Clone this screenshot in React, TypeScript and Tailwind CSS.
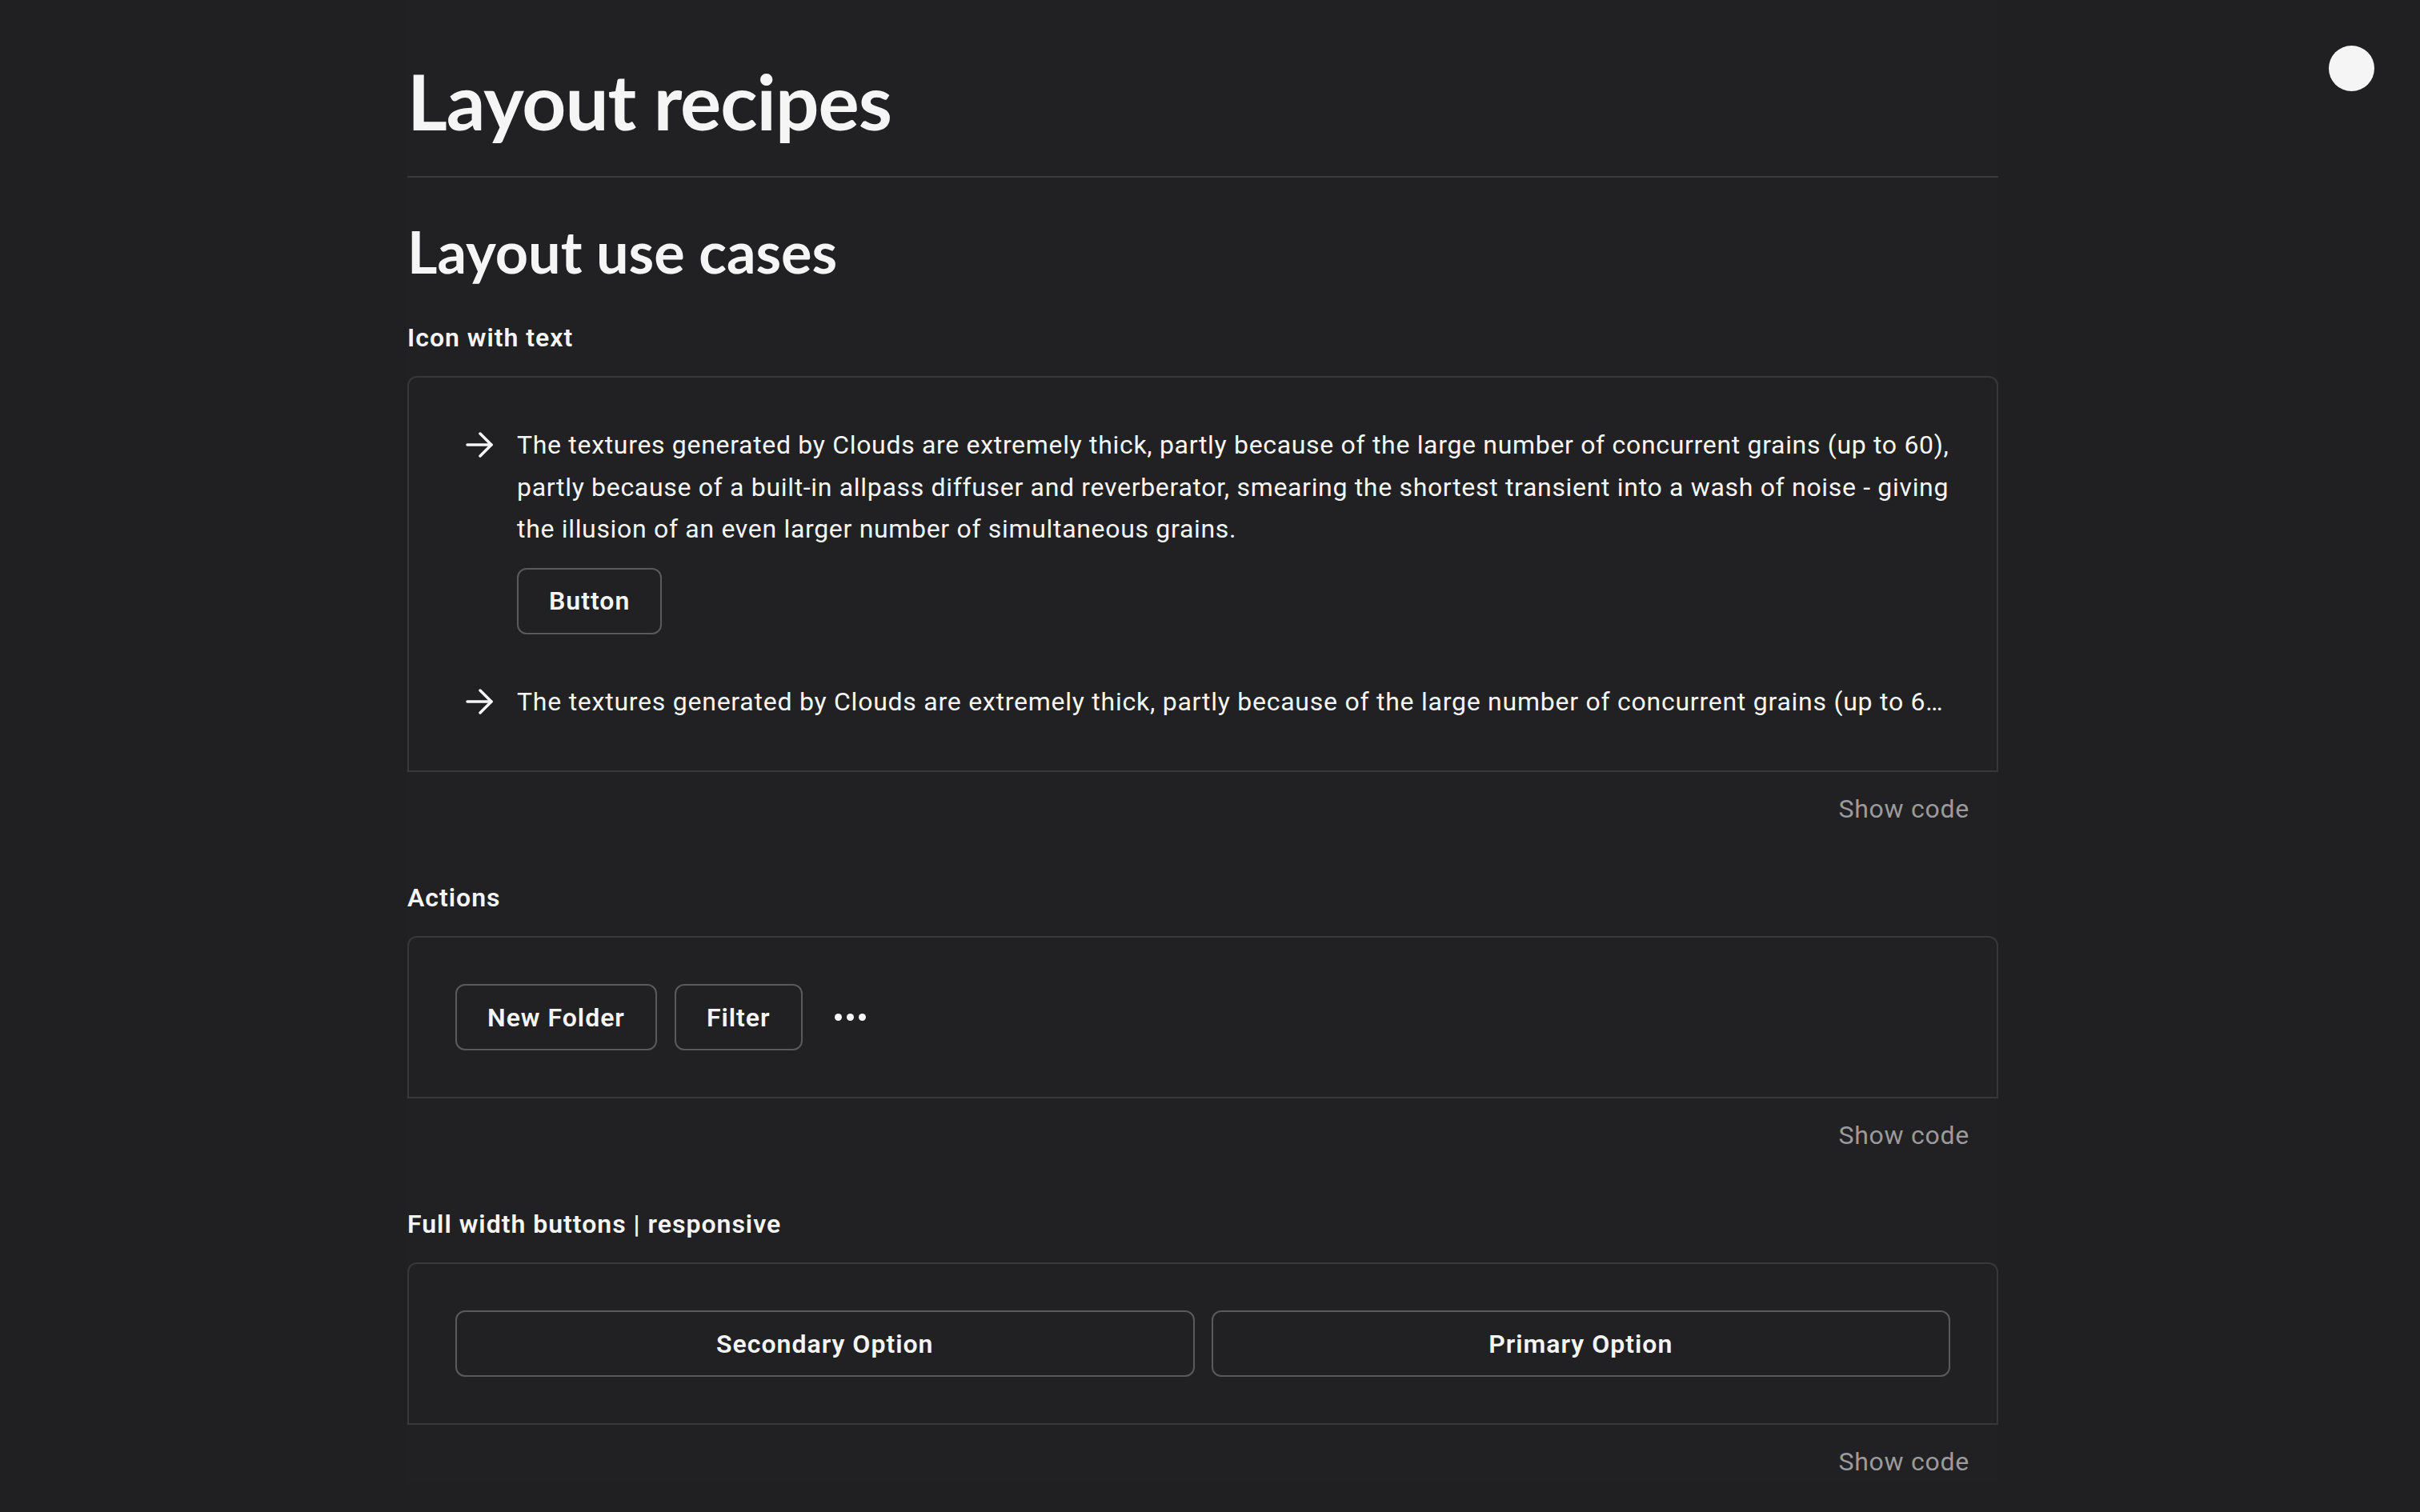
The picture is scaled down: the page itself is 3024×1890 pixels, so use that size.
import React from 'react';

const headingFont = { fontFamily: 'Lato, "Liberation Sans", sans-serif' };
const bodyFont = { fontFamily: 'Roboto, "Liberation Sans", sans-serif' };

const Arrow = () => (
  <svg width="34" height="32" viewBox="0 0 34 32" fill="none" stroke="currentColor" strokeWidth="3.5" strokeLinecap="round" strokeLinejoin="round">
    <path d="M2 16h30" />
    <path d="M18 2l14 14-14 14" />
  </svg>
);

const OutlineButton = ({ children, className = '' }: { children: React.ReactNode; className?: string }) => (
  <button
    className={`h-[83px] rounded-[12px] border-2 border-[#5a5a5c] bg-transparent px-[38px] text-[32px] font-semibold tracking-[1px] text-[#f5f5f5] ${className}`}
    style={bodyFont}
  >
    {children}
  </button>
);

const Example = ({ title, first, children }: { title: string; first?: boolean; children: React.ReactNode }) => (
  <section className={first ? 'mt-[46px]' : 'mt-[58px]'}>
    <h3 className="mb-[21px] text-[32px] font-semibold leading-[53px] tracking-[1px] text-[#f5f5f5]">{title}</h3>
    <div className="rounded-t-[12px] border-2 border-[#38383a] px-[58px] py-[58px]">{children}</div>
    <div className="pt-[20px] pr-[36px] text-right text-[32px] leading-[53px] tracking-[0.75px] text-[#9b9b9d]">
      Show code
    </div>
  </section>
);

const text =
  'The textures generated by Clouds are extremely thick, partly because of the large number of concurrent grains (up to 60), partly because of a built-in allpass diffuser and reverberator, smearing the shortest transient into a wash of noise - giving the illusion of an even larger number of simultaneous grains.';

export default function App() {
  return (
    <div className="relative min-h-screen bg-[#202022] pb-[80px]" style={bodyFont}>
      <div className="absolute top-[57px] left-[2910px] h-[57px] w-[57px] rounded-full bg-[#f5f5f5]" />

      <main className="ml-[509px] w-[1988px] bg-[#212123] pt-[78px] text-[#f5f5f5]">
        <h1
          className="border-b-2 border-[#3a3a3c] pb-[46px] text-[96px] font-bold leading-[96px] tracking-[-1px]"
          style={headingFont}
        >
          Layout recipes
        </h1>
        <h2 className="mt-[56px] text-[72px] font-bold leading-[72px]" style={headingFont}>
          Layout use cases
        </h2>

        <Example title="Icon with text" first>
          <div className="flex">
            <div className="w-[77px] shrink-0 pt-[10px] pl-[13px]">
              <Arrow />
            </div>
            <div className="min-w-0 flex-1">
              <p className="text-[32px] leading-[52.5px] tracking-[0.68px]">{text}</p>
              <OutlineButton className="mt-[22px]">Button</OutlineButton>
            </div>
          </div>
          <div className="mt-[58px] flex pb-[2px]">
            <div className="w-[77px] shrink-0 pt-[10px] pl-[13px]">
              <Arrow />
            </div>
            <p className="min-w-0 flex-1 truncate text-[32px] leading-[52.5px] tracking-[0.75px]">{text}</p>
          </div>
        </Example>

        <Example title="Actions">
          <div className="flex items-center">
            <OutlineButton>New Folder</OutlineButton>
            <OutlineButton className="ml-[22px]">Filter</OutlineButton>
            <div className="ml-[40px] flex items-center gap-[6px]">
              <span className="h-[9px] w-[9px] rounded-full bg-[#f5f5f5]" />
              <span className="h-[9px] w-[9px] rounded-full bg-[#f5f5f5]" />
              <span className="h-[9px] w-[9px] rounded-full bg-[#f5f5f5]" />
            </div>
          </div>
        </Example>

        <Example title="Full width buttons | responsive">
          <div className="flex gap-[21px]">
            <OutlineButton className="flex-1">Secondary Option</OutlineButton>
            <OutlineButton className="flex-1">Primary Option</OutlineButton>
          </div>
        </Example>
      </main>
    </div>
  );
}
